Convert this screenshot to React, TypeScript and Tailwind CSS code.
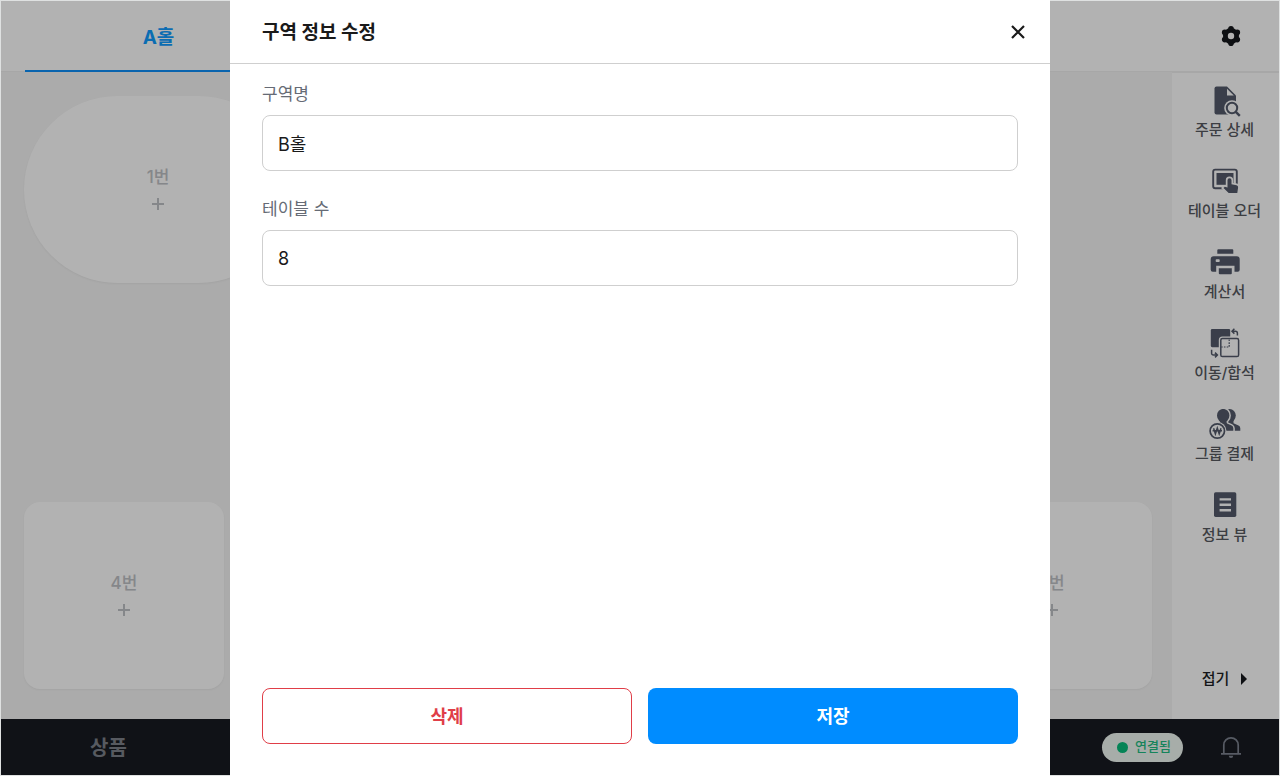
import { useState, type ReactNode } from "react";

const TABLES = ["4번", "5번", "6번", "7번"];

function OrderDetailIcon() {
  return (
    <svg viewBox="0 0 32 32" className="size-8" fill="none" aria-hidden="true">
      <path d="M7.5 1.5H18L27 10.5V29.5H7.5a2 2 0 0 1-2-2v-24a2 2 0 0 1 2-2Z" fill="#535a6b" />
      <path d="M18 3.8V10.6H24.8Z" fill="#fff" />
      <circle cx="23" cy="23" r="7.8" fill="#fff" />
      <path d="m27 27 5 5" stroke="#fff" strokeWidth="5" />
      <circle cx="23" cy="23" r="5.2" stroke="#535a6b" strokeWidth="2" />
      <path d="m26.8 26.8 4 4" stroke="#535a6b" strokeWidth="2.4" />
    </svg>
  );
}

function TableOrderIcon() {
  return (
    <svg viewBox="0 0 32 32" className="size-8" fill="none" aria-hidden="true">
      <rect x="4.2" y="3.6" width="23.6" height="18.6" rx="2" stroke="#535a6b" strokeWidth="1.9" />
      <rect x="7.5" y="7" width="17" height="11.8" fill="#535a6b" />
      <path
        d="M20.5 12.2a2 2 0 0 1 2 2v4l5 1a2 2 0 0 1 1.6 2.2L28.3 27h-8.6l-5.2-5 1.3-1.2 2.7.8v-7.4a2 2 0 0 1 2-2Z"
        fill="#535a6b"
        stroke="#fff"
        strokeWidth="3.4"
        paintOrder="stroke"
      />
    </svg>
  );
}

function BillIcon() {
  return (
    <svg viewBox="0 0 32 32" className="size-8" aria-hidden="true">
      <path d="M8.3 3.3a1 1 0 0 1 1-1h14a1 1 0 0 1 1 1v3.4h-16Z" fill="#535a6b" />
      <path
        d="M4.7 9.3h23a3 3 0 0 1 3 3v10.5a2 2 0 0 1-2 2h-3.2v-6H7.2v6H3.7a2 2 0 0 1-2-2V12.3a3 3 0 0 1 3-3Z"
        fill="#535a6b"
      />
      <rect x="6.7" y="12.2" width="4" height="2.8" rx=".8" fill="#fff" />
      <path d="M9.8 21.3h13v5a1 1 0 0 1-1 1h-11a1 1 0 0 1-1-1Z" fill="#535a6b" />
    </svg>
  );
}

function MoveMergeIcon() {
  return (
    <svg viewBox="0 0 32 32" className="size-8" fill="none" aria-hidden="true">
      <rect x="1.8" y="1" width="19.4" height="18.2" rx="1.4" fill="#535a6b" />
      <rect x="11.8" y="10.6" width="17.8" height="18" rx="1.6" fill="#fff" stroke="#fff" strokeWidth="4" />
      <rect x="11.8" y="10.6" width="17.8" height="18" rx="1.6" stroke="#535a6b" strokeWidth="1.5" />
      <path d="M20.2 11.5v7.5h-8" stroke="#535a6b" strokeWidth="1.2" strokeDasharray="1.6 1.2" />
      <path d="M28.4 7.4V5.2a2 2 0 0 0-2-2h-3M25.4.8 23 3.2l2.4 2.4" stroke="#535a6b" strokeWidth="1.5" />
      <path d="M2.6 21.8v3.4a1.8 1.8 0 0 0 1.8 1.8h3.8M6 24.6 8.4 27 6 29.4" stroke="#535a6b" strokeWidth="1.5" />
    </svg>
  );
}

function GroupPayIcon() {
  return (
    <svg viewBox="0 0 32 32" className="size-8" fill="none" aria-hidden="true">
      <ellipse cx="20.6" cy="6.6" rx="6.2" ry="6.5" fill="#535a6b" />
      <path d="M17.5 10h7v4.2l5 2.3a3 3 0 0 1 1.800 2.700v2.500H17.500Z" fill="#535a6b" />
      <g fill="#535a6b" stroke="#fff" strokeWidth="3" paintOrder="stroke">
        <path d="M10.800 10.500h6.800v3.800l5 2.300a3 3 0 0 1 1.700 2.700v2.400H4v-2.400c0-1.200.6-2.200 1.700-2.700l5.100-2.300Z" />
        <ellipse cx="14.200" cy="6.500" rx="6.200" ry="6.600" />
      </g>
      <path d="M10.800 10.500h6.800v4.500h-6.800Z" fill="#535a6b" />
      <circle cx="8.300" cy="22" r="9.200" fill="#fff" />
      <circle cx="8.300" cy="22" r="7.200" stroke="#535a6b" strokeWidth="1.700" />
      <path d="m4.600 19.200 1.800 5.600 1.900-5.600 1.900 5.600 1.800-5.600M3.600 21.800h9.400" stroke="#535a6b" strokeWidth="1.500" />
    </svg>
  );
}

function InfoViewIcon() {
  return (
    <svg viewBox="0 0 32 32" className="size-8" fill="none" aria-hidden="true">
      <rect x="5" y="2.300" width="22.300" height="24.600" rx="1.600" fill="#535a6b" />
      <path d="M10.600 9.400H22M10.600 14.800H22M10.600 20.200H22" stroke="#fff" strokeWidth="2.400" />
    </svg>
  );
}

function GearIcon() {
  return (
    <svg viewBox="0 0 24 24" className="size-6" aria-hidden="true">
      <g fill="#15171c">
        <circle cx="12" cy="12" r="8" />
        <circle cx="12" cy="4.800" r="2.800" />
        <circle cx="18.300" cy="8.400" r="2.800" />
        <circle cx="18.300" cy="15.600" r="2.800" />
        <circle cx="12" cy="19.200" r="2.800" />
        <circle cx="5.700" cy="15.600" r="2.800" />
        <circle cx="5.700" cy="8.400" r="2.800" />
      </g>
      <circle cx="12" cy="12" r="3.200" fill="#fff" />
    </svg>
  );
}

function BellIcon() {
  return (
    <svg viewBox="0 0 24 24" className="size-6" fill="none" aria-hidden="true">
      <path d="M4.800 18.500V10a7.200 7.200 0 0 1 14.400 0v8.500M2 18.800h20" stroke="#7d8390" strokeWidth="1.700" />
      <path d="M9.800 20.800h4.400a2.200 2.200 0 0 1-4.400 0Z" fill="#7d8390" />
    </svg>
  );
}

const MENU = [
  { label: "주문 상세", icon: <OrderDetailIcon /> },
  { label: "테이블 오더", icon: <TableOrderIcon /> },
  { label: "계산서", icon: <BillIcon /> },
  { label: "이동/합석", icon: <MoveMergeIcon /> },
  { label: "그룹 결제", icon: <GroupPayIcon /> },
  { label: "정보 뷰", icon: <InfoViewIcon /> },
];

function TableCard({ name, className }: { name: string; className: string }) {
  return (
    <button
      type="button"
      className={`flex h-[187px] flex-col items-center justify-center bg-white pt-0.5 text-[17px] leading-[27px] font-medium text-[#bfc2c6] shadow-xs ${className}`}
    >
      <span>{name}</span>
      <svg viewBox="0 0 26 26" className="size-[26px]" stroke="#bfc2c6" strokeWidth="2" aria-hidden="true">
        <path d="M13 7v12M7 13h12" />
      </svg>
    </button>
  );
}

function Field({
  id,
  label,
  value,
  onChange,
}: {
  id: string;
  label: string;
  value: string;
  onChange: (value: string) => void;
}) {
  return (
    <div className="flex flex-col gap-[7px]">
      <label htmlFor={id} className="text-[17px] leading-7 text-[#666b75]">
        {label}
      </label>
      <input
        id={id}
        value={value}
        onChange={(e) => onChange(e.target.value)}
        className="h-14 w-full rounded-lg border border-[#cfcfcf] bg-white px-[15px] text-[18px] text-[#1a1a1a] outline-none"
      />
    </div>
  );
}

function Backdrop({ children }: { children: ReactNode }) {
  return (
    <>
      <div className="absolute inset-0 bg-black/30" />
      <div className="fixed inset-0 flex justify-center">{children}</div>
    </>
  );
}

export default function App() {
  const [zoneName, setZoneName] = useState("B홀");
  const [tableCount, setTableCount] = useState("8");

  return (
    <div className="relative flex h-screen flex-col overflow-hidden border border-[#dfe1e1] bg-[#f5f5f5] font-['Inter','Noto_Sans_CJK_KR',sans-serif]">
      <header className="flex h-[71px] shrink-0 justify-between border-b border-[#f0f0f0] bg-white pr-9 pl-6">
        <button
          type="button"
          className="-mb-px w-[267px] border-b-2 border-[#0d90fa] pt-1.5 text-[19px] font-bold text-[#109cff]"
        >
          A홀
        </button>
        <button type="button" aria-label="설정">
          <GearIcon />
        </button>
      </header>

      <div className="flex min-h-0 flex-1">
        <main className="flex flex-1 flex-col justify-between pt-6 pr-5 pb-[30px] pl-[23px]">
          <TableCard name="1번" className="w-[268px] rounded-full" />
          <div className="flex justify-between">
            {TABLES.map((name) => (
              <TableCard key={name} name={name} className="w-[200px] rounded-2xl" />
            ))}
          </div>
        </main>

        <aside className="flex w-[107px] flex-col items-center border-t border-[#f0f0f0] bg-white pt-3 pr-0.5 pb-7">
          <nav className="flex flex-col">
            {MENU.map((item) => (
              <button
                key={item.label}
                type="button"
                className="flex h-[81px] flex-col items-center gap-px text-[15px] leading-6 font-medium text-[#56595f]"
              >
                {item.icon}
                {item.label}
              </button>
            ))}
          </nav>
          <button
            type="button"
            className="mt-auto flex items-center gap-3 text-[15px] leading-6 font-medium text-[#1d1f24]"
          >
            접기
            <svg viewBox="0 0 6 12" className="h-3 w-1.5" fill="#15171c" aria-hidden="true">
              <path d="M0 0 6 6 0 12Z" />
            </svg>
          </button>
        </aside>
      </div>

      <footer className="flex h-14 shrink-0 items-center justify-between bg-[#181b21] pr-9 pl-[89px]">
        <button type="button" className="pt-0.5 text-[20px] font-bold text-[#7d818a]">
          상품
        </button>
        <div className="flex items-center gap-9">
          <span className="flex h-[29px] items-center gap-[7px] rounded-full bg-[#eff8f3] pr-3 pl-[15px] text-[13px] font-medium text-[#1fbd83]">
            <span className="size-[11px] rounded-full bg-[#08bd7c]" />
            연결됨
          </span>
          <button type="button" aria-label="알림">
            <BellIcon />
          </button>
        </div>
      </footer>

      <Backdrop>
        <section
          role="dialog"
          aria-modal="true"
          aria-labelledby="zone-title"
          className="flex w-[820px] flex-col bg-white"
        >
          <div className="flex h-16 shrink-0 items-center justify-between border-b border-[#cfcfcf] pr-5 pl-8">
            <h2 id="zone-title" className="pt-1 text-[19px] font-bold text-[#1a1a1a]">
              구역 정보 수정
            </h2>
            <button type="button" aria-label="닫기">
              <svg viewBox="0 0 24 24" className="size-6" stroke="#1a1a1a" strokeWidth="2.200" aria-hidden="true">
                <path d="m6 6 12 12M18 6 6 18" />
              </svg>
            </button>
          </div>
          <form className="flex flex-1 flex-col px-8 pt-4 pb-8" onSubmit={(e) => e.preventDefault()}>
            <div className="flex flex-col gap-6">
              <Field id="zone-name" label="구역명" value={zoneName} onChange={setZoneName} />
              <Field id="table-count" label="테이블 수" value={tableCount} onChange={setTableCount} />
            </div>
            <div className="mt-auto grid grid-cols-2 gap-4">
              <button
                type="button"
                className="h-14 rounded-lg border border-[#e03e48] text-[18px] font-bold text-[#e03e48]"
              >
                삭제
              </button>
              <button type="submit" className="h-14 rounded-lg bg-[#008cff] text-[18px] font-bold text-white">
                저장
              </button>
            </div>
          </form>
        </section>
      </Backdrop>
    </div>
  );
}
